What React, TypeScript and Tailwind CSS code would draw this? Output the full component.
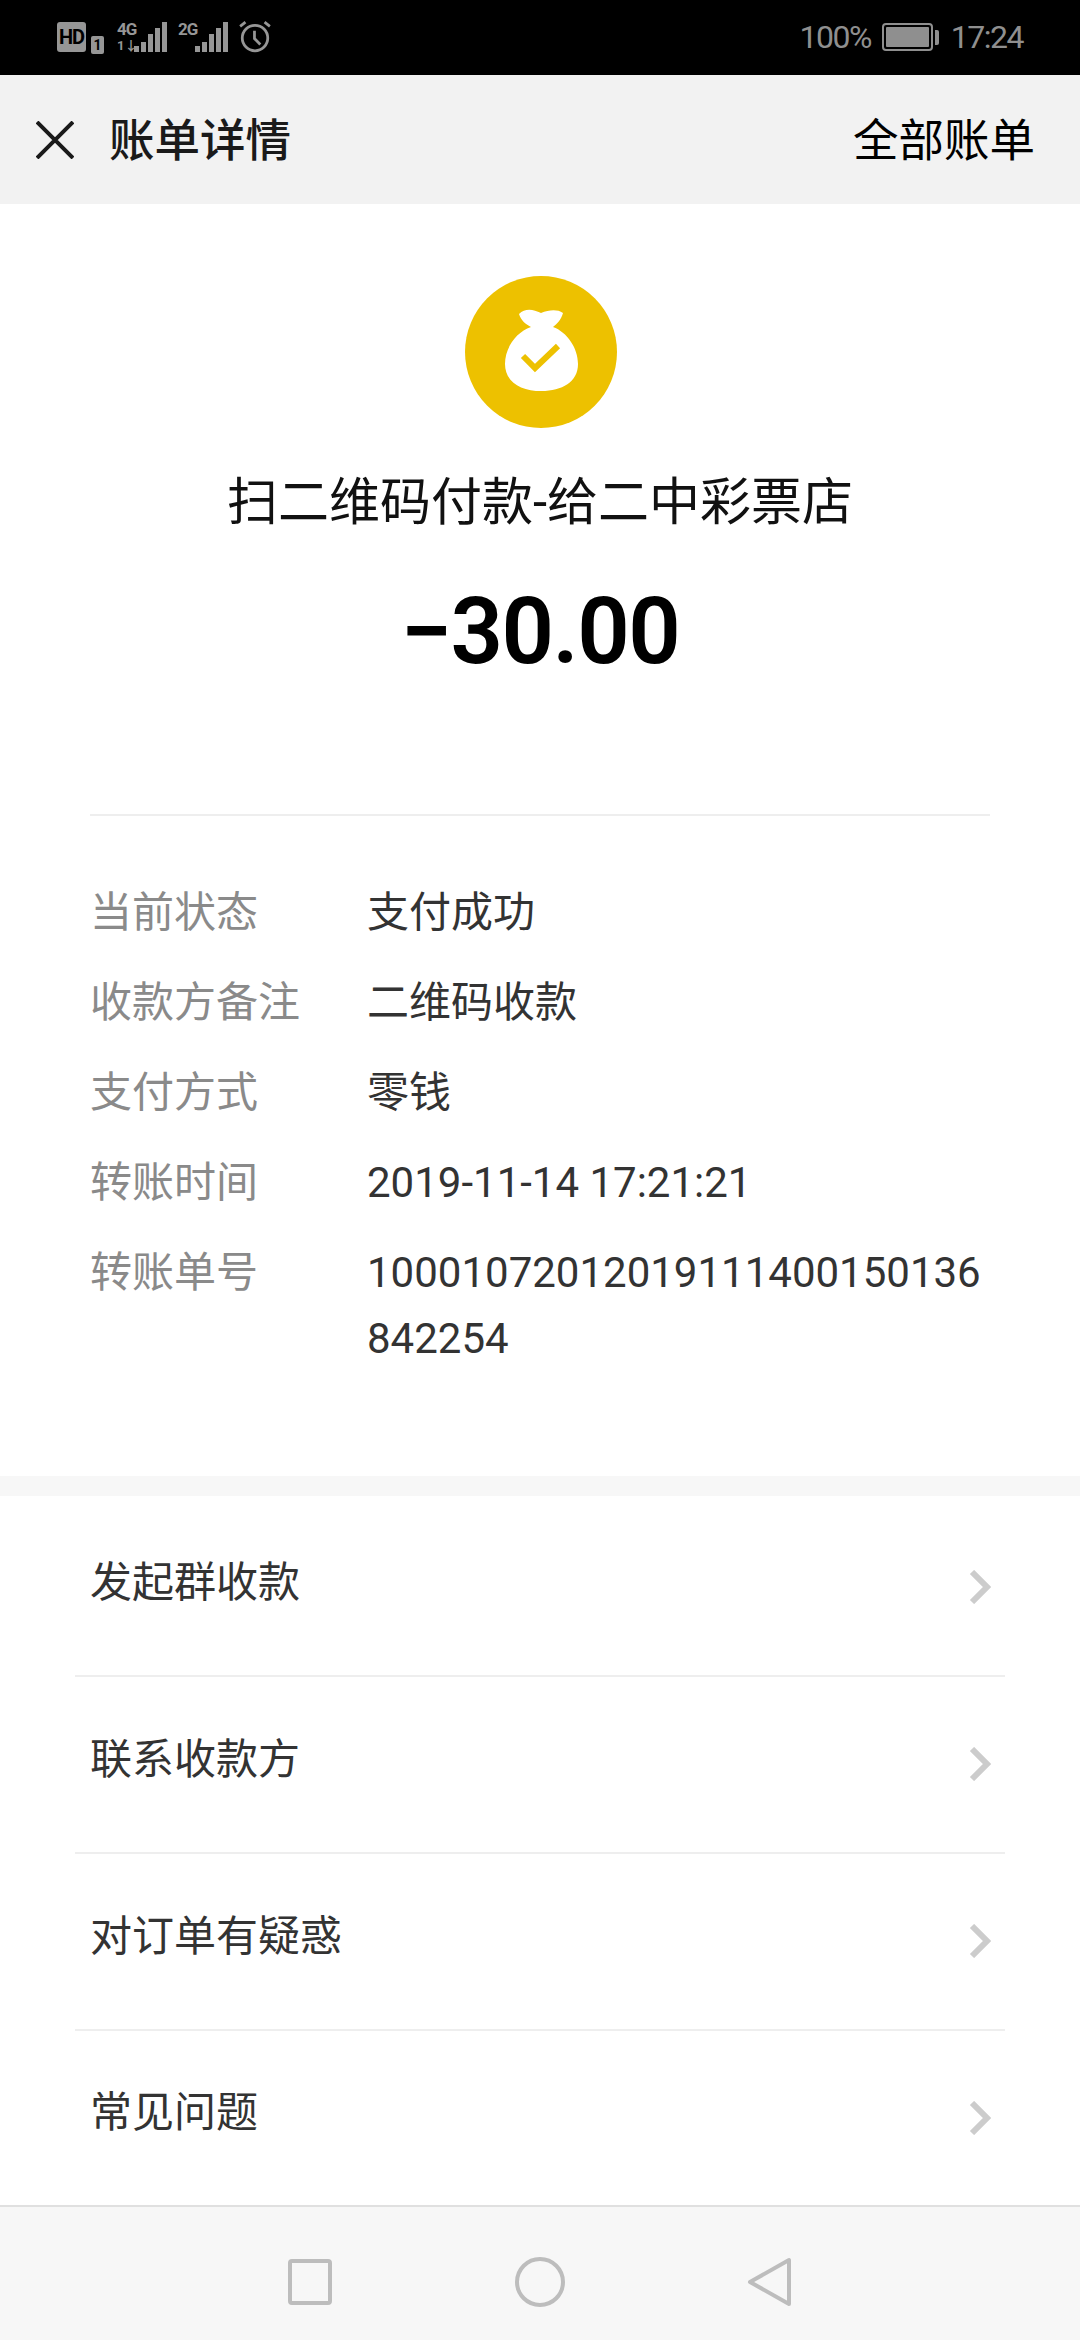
const cjk = "font-['Roboto','Noto_Sans_CJK_SC',sans-serif]"

const details = [
  { label: "当前状态", value: "支付成功" },
  { label: "收款方备注", value: "二维码收款" },
  { label: "支付方式", value: "零钱" },
  { label: "转账时间", value: "2019-11-14 17:21:21" },
  { label: "转账单号", value: "10001072012019111400150136842254" },
]

const actions = ["发起群收款", "联系收款方", "对订单有疑惑", "常见问题"]

export default function App() {
  return (
    <div className={`${cjk} flex h-[2340px] w-[1080px] flex-col overflow-hidden bg-white`}>
      <StatusBar />

      {/* Header */}
      <header className="flex h-[130px] items-center justify-between bg-[#f2f2f2] pr-[45px] pl-[36px]">
        <div className="flex items-center gap-[35px]">
          <svg className="h-[38px] w-[38px]" viewBox="0 0 38 38" fill="none" stroke="#1a1a1a" strokeWidth="4" aria-hidden="true">
            <path d="M1 1L37 37M37 1L1 37" />
          </svg>
          <h1 className="mt-[4px] text-[45.5px] leading-none font-medium text-[#1a1a1a]">账单详情</h1>
        </div>
        <span className="mt-[4px] text-[45.5px] leading-none text-black">全部账单</span>
      </header>

      {/* Summary */}
      <section className="flex flex-col items-center pt-[72px]">
        <div className="ml-[2px]">
          <BagIcon />
        </div>
        <div className="mt-[45px] text-[51px] leading-[60px] text-[#111]">扫二维码付款-给二中彩票店</div>
        <div className="mt-[44px] text-[92px] leading-[110px] font-semibold tracking-[-1.5px] text-black">−30.00</div>
      </section>

      {/* Details */}
      <section className="mx-[90px] mt-[127px] border-t-2 border-[#eeeeee] pt-[64px]">
        <dl className="flex flex-col gap-[24px]">
          {details.map((row) => (
            <div key={row.label} className="flex text-[42px] leading-[66px]">
              <dt className="w-[277px] shrink-0 text-[#8a8a8a]">{row.label}</dt>
              <dd className="min-w-0 flex-1 break-all text-[#333]">{row.value}</dd>
            </div>
          ))}
        </dl>
      </section>

      <div className="mt-[104px] h-[20px] bg-[#f7f7f7]" />

      {/* Actions */}
      <ul className="flex-1 px-[75px] pt-[4px]">
        {actions.map((title, i) => (
          <li
            key={title}
            className={`flex items-center justify-between pr-[14px] pb-[11px] pl-[15px] text-[42px] text-[#333] ${
              i < actions.length - 1 ? "h-[177px] border-b-2 border-[#eeeeee]" : "h-[174px]"
            }`}
          >
            <span>{title}</span>
            <svg className="mt-[10px] h-[34px] w-[22px]" viewBox="0 0 22 34" fill="none" stroke="#cccccc" strokeWidth="6" aria-hidden="true">
              <path d="M3 2L18 17L3 32" />
            </svg>
          </li>
        ))}
      </ul>

      <NavBar />
    </div>
  )
}

function StatusBar() {
  return (
    <div className="flex h-[75px] items-center justify-between bg-black px-[57px] text-[#969696]">
      <div className="flex items-center">
        <span className="flex h-[30px] w-[29px] items-center justify-center rounded-[3px] bg-[#969696] text-[20px] leading-none font-bold tracking-[-1px] text-black">HD</span>
        <span className="ml-[5px] flex h-[18px] w-[13px] items-center justify-center self-end rounded-[2px] bg-[#969696] text-[14px] leading-none font-bold text-black">1</span>
        <Signal className="ml-[13px]" top="4G" bottom="1↓" />
        <Signal className="ml-[11px]" top="2G" />
        <svg className="ml-[10px] h-[34px] w-[34px]" viewBox="0 0 32 32" fill="none" stroke="#969696" strokeWidth="2.6" aria-hidden="true">
          <circle cx="16" cy="17" r="12" />
          <path d="M15.5 10V17.5L21 23M2 6L7 2M30 6L25 2" />
        </svg>
      </div>
      <div className="flex items-center text-[32px] leading-none tracking-[-1.5px] text-[#8f8f8f]">
        <span>100%</span>
        <span className="ml-[11px] flex h-[28px] w-[51px] rounded-[4px] border-2 border-[#8f8f8f] p-[2px]">
          <span className="flex-1 rounded-[1px] bg-[#8f8f8f]" />
        </span>
        <span className="ml-[2px] h-[15px] w-[4px] rounded-r-[2px] bg-[#8f8f8f]" />
        <span className="ml-[12px]">17:24</span>
      </div>
    </div>
  )
}

function Signal({ top, bottom, className }: { top: string; bottom?: string; className: string }) {
  return (
    <div className={`${className} relative flex h-[30px] items-end gap-[2px] pl-[17px]`}>
      <span className="absolute top-0 left-0 text-[17px] leading-[14px] font-bold tracking-[-1px]">{top}</span>
      {bottom && <span className="absolute bottom-0 left-0 text-[13px] leading-[12px] font-bold">{bottom}</span>}
      <span className="h-[6px] w-[5px] bg-[#969696]" />
      <span className="h-[10px] w-[5px] bg-[#969696]" />
      <span className="h-[18px] w-[5px] bg-[#969696]" />
      <span className="h-[24px] w-[5px] bg-[#969696]" />
      <span className="h-[30px] w-[5px] bg-[#969696]" />
    </div>
  )
}

function BagIcon() {
  return (
    <svg className="h-[152px] w-[152px]" viewBox="0 0 152 152" aria-hidden="true">
      <circle cx="76" cy="76" r="76" fill="#edc100" />
      <path
        d="M54 38C60 32 68 33 76 37C84 34 92 33 98 37C96 44 92 48 88 51C102 56 113 72 113 88C113 106 97 115 76.5 115C56 115 40 106 40 88C40 72 51 56 66 51C60 48 56 44 54 38Z"
        fill="#fff"
      />
      <path d="M58 80L70 92L93 70" fill="none" stroke="#edc100" strokeWidth="6" />
    </svg>
  )
}

function NavBar() {
  return (
    <nav className="flex h-[135px] items-center justify-center gap-[180px] border-t-2 border-[#e0e0e0] bg-[#f7f7f7] pt-[16px]">
      <svg className="h-[50px] w-[50px]" viewBox="0 0 50 50" fill="none" stroke="#bdbdbd" strokeWidth="4" aria-hidden="true">
        <rect x="5" y="4" width="40" height="42" rx="2" />
      </svg>
      <svg className="h-[50px] w-[50px]" viewBox="0 0 50 50" fill="none" stroke="#bdbdbd" strokeWidth="4" aria-hidden="true">
        <circle cx="25" cy="25" r="23" />
      </svg>
      <svg className="h-[50px] w-[50px]" viewBox="0 0 50 50" fill="none" stroke="#bdbdbd" strokeWidth="4" strokeLinejoin="round" aria-hidden="true">
        <path d="M44 3V47L5 25Z" />
      </svg>
    </nav>
  )
}
